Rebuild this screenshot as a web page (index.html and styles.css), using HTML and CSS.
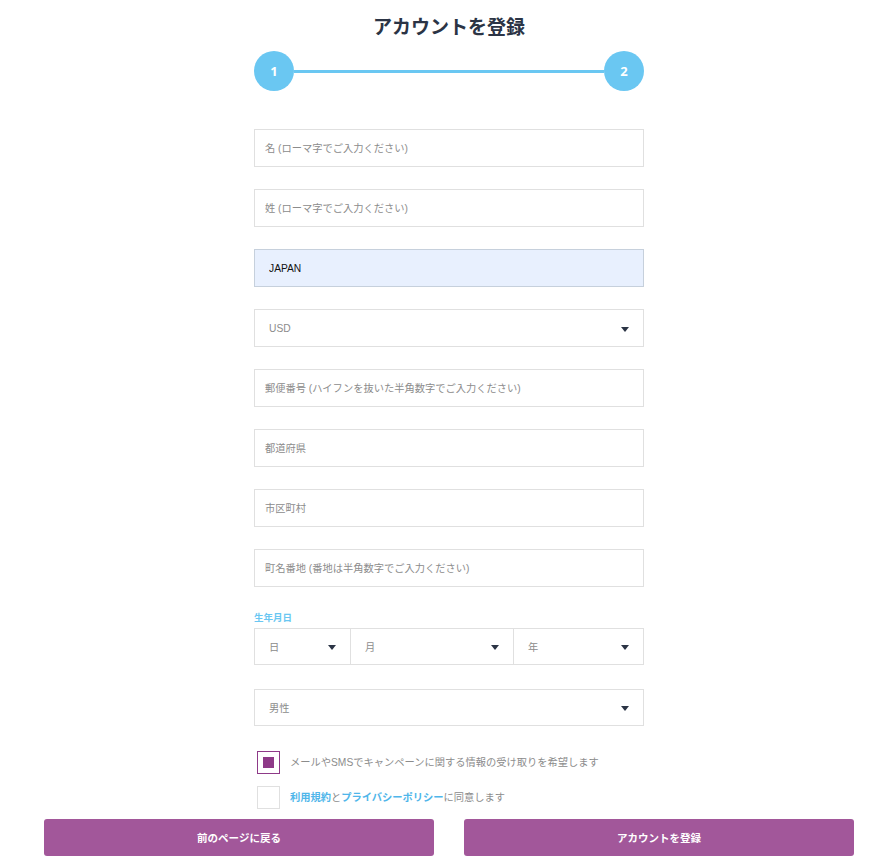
FILE: index.html
```html
<!DOCTYPE html>
<html lang="ja">
<head>
    <meta charset="UTF-8">
    <meta name="viewport" content="width=device-width, initial-scale=1.0">
    <title>アカウントを登録</title>
    <link rel="stylesheet" href="styles.css">
</head>
<body>
    <div class="container">
        <h1 class="title">アカウントを登録</h1>
        <div class="stepper">
            <div class="step">1</div>
            <div class="step-line"></div>
            <div class="step">2</div>
        </div>
        <form class="form">
            <input class="field" type="text" placeholder="名 (ローマ字でご入力ください)">
            <input class="field" type="text" placeholder="姓 (ローマ字でご入力ください)">
            <input class="field field-filled" type="text" value="JAPAN">
            <div class="field select wide"><span>USD</span><span class="arrow"></span></div>
            <input class="field" type="text" placeholder="郵便番号 (ハイフンを抜いた半角数字でご入力ください)">
            <input class="field" type="text" placeholder="都道府県">
            <input class="field" type="text" placeholder="市区町村">
            <input class="field" type="text" placeholder="町名番地 (番地は半角数字でご入力ください)">

            <div class="label">生年月日</div>
            <div class="date-row">
                <div class="select wide"><span>日</span><span class="arrow"></span></div>
                <div class="select wide"><span>月</span><span class="arrow"></span></div>
                <div class="select wide"><span>年</span><span class="arrow"></span></div>
            </div>

            <div class="field select wide gender"><span>男性</span><span class="arrow"></span></div>

            <label class="check">
                <span class="box checked"><span class="mark"></span></span>
                <span>メールやSMSでキャンペーンに関する情報の受け取りを希望します</span>
            </label>
            <label class="check check-last">
                <span class="box"></span>
                <span><a href="#">利用規約</a>と<a href="#">プライバシーポリシー</a>に同意します</span>
            </label>
        </form>
        <div class="actions">
            <button type="button" class="btn">前のページに戻る</button>
            <button type="button" class="btn">アカウントを登録</button>
        </div>
    </div>
</body>
</html>
```

FILE: styles.css
```css
body {
    margin: 0;
    font-family: "Open Sans", "Noto Sans CJK JP", sans-serif;
    background-color: #fff;
    color: #2b3445;
}
.container {
    width: 810px;
    margin: 0 0 0 44px;
    padding-top: 14px;
}
.title {
    margin: 0;
    text-align: center;
    font-size: 19px;
    line-height: 26px;
    font-weight: 700;
    color: #2b3445;
}
.stepper {
    width: 390px;
    margin: 11px auto 0;
    display: flex;
    align-items: center;
}
.step {
    width: 40px;
    height: 40px;
    border-radius: 50%;
    background-color: #6ac7f2;
    color: #fff;
    font-size: 13px;
    font-weight: 700;
    display: flex;
    align-items: center;
    justify-content: center;
    flex: none;
}
.step-line {
    flex: 1;
    height: 3px;
    background-color: #6ac7f2;
}
.form {
    width: 390px;
    margin: 38px auto 0;
    display: flex;
    flex-direction: column;
    font-family: "Liberation Sans", "Noto Sans CJK JP", sans-serif;
}
.field {
    box-sizing: border-box;
    width: 100%;
    height: 38px;
    margin: 0 0 22px;
    padding: 0 10px;
    border: 1px solid #e0e0e0;
    background-color: #fff;
    font-family: inherit;
    font-size: 10.25px;
    color: #222;
    outline: none;
}
.field::placeholder {
    color: #8c8c8c;
}
.field-filled {
    background-color: #e8f0fe;
    border-color: #c6d0dc;
    padding-left: 14px;
    color: #111;
}
.select {
    display: flex;
    align-items: center;
    justify-content: space-between;
    color: #8c8c8c;
}
.wide {
    padding-left: 14px;
    padding-right: 14px;
}
.arrow {
    width: 0;
    height: 0;
    border-left: 4.5px solid transparent;
    border-right: 4.5px solid transparent;
    border-top: 5px solid #2b3445;
    margin-top: 2px;
}
.label {
    margin-top: 3px;
    font-family: "Open Sans", "Noto Sans CJK JP", sans-serif;
    font-size: 9.5px;
    line-height: 12px;
    font-weight: 700;
    color: #6ac7f2;
    margin-bottom: 4px;
}
.date-row {
    display: grid;
    grid-template-columns: 97px 163px 1fr;
    height: 37px;
    margin-bottom: 24px;
}
.date-row .select {
    box-sizing: border-box;
    border: 1px solid #e0e0e0;
    font-size: 10.25px;
}
.date-row .select + .select {
    border-left: none;
}
.gender {
    height: 37px;
    margin-bottom: 25px;
}
.check {
    display: flex;
    align-items: center;
    gap: 10px;
    height: 23px;
    margin-left: 3px;
    font-size: 10.25px;
    line-height: 14px;
    color: #8c8c8c;
    margin-bottom: 12px;
}
.check-last {
    margin-bottom: 10px;
}
.check a {
    color: #4fb6ea;
    font-weight: 700;
    text-decoration: none;
}
.box {
    box-sizing: border-box;
    width: 23px;
    height: 23px;
    border: 1px solid #e0e0e0;
    display: flex;
    align-items: center;
    justify-content: center;
    flex: none;
}
.box.checked {
    border-color: #8e3a88;
}
.mark {
    width: 11px;
    height: 11px;
    background-color: #8e3a88;
}
.actions {
    display: grid;
    grid-template-columns: 1fr 1fr;
    gap: 30px;
}
.btn {
    height: 37px;
    border: none;
    border-radius: 3px;
    background-color: #a2579a;
    color: #fff;
    font-family: "Open Sans", "Noto Sans CJK JP", sans-serif;
    font-size: 10.5px;
    font-weight: 700;
    cursor: pointer;
}
.btn:hover {
    background-color: #8e3a88;
}
```
